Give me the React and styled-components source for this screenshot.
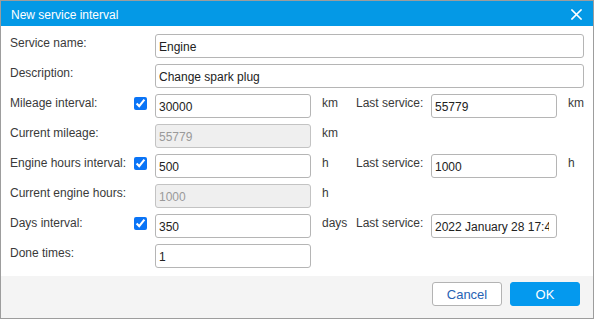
import styled, { createGlobalStyle } from 'styled-components';

const GlobalStyle = createGlobalStyle`
  html, body {
    margin: 0;
    padding: 0;
    background: #fff;
  }
  body {
    font-family: "Liberation Sans", Arial, sans-serif;
    font-size: 12px;
  }
`

const Dialog = styled.div`
  width: 594px;
  height: 319px;
  box-sizing: border-box;
  border: 1px solid #9d9d9d;
  display: flex;
  flex-direction: column;
  background: #fff;
`

const Header = styled.div`
  height: 25px;
  background: #0499e6;
  display: flex;
  align-items: center;
  justify-content: space-between;
  padding: 0 11px 0 10px;
  color: #fff;
`

const Title = styled.span`
  font-size: 12px;
  line-height: 14px;
  padding-top: 2px;
`

const CloseButton = styled.button`
  border: 0;
  background: transparent;
  padding: 0;
  width: 12px;
  height: 12px;
  display: flex;
  align-items: center;
  justify-content: center;
  cursor: pointer;
  margin-top: 2px;
`

const Form = styled.div`
  display: grid;
  grid-template-columns: 124px 21px 156px 45px 75px 126px 27px;
  grid-auto-rows: 24px;
  row-gap: 6px;
  padding: 8px 9px 8px 9px;
  flex: 1;
  align-content: start;
`

const Label = styled.label`
  grid-column: ${({ col }) => col || 1};
  color: #3a3a3a;
  line-height: 14px;
  padding-top: 2px;
  white-space: nowrap;
`

const Unit = styled.span`
  grid-column: ${({ col }) => col};
  color: #3a3a3a;
  line-height: 14px;
  padding: 2px 0 0 11px;
`

const Check = styled.input.attrs({ type: 'checkbox' })`
  grid-column: 2;
  width: 13px;
  height: 13px;
  margin: 3px 0 0 0;
  accent-color: #0a74f6;
`

const TextInput = styled.input`
  grid-column: ${({ wide, col }) => wide ? '3 / -1' : col || 3};
  box-sizing: border-box;
  height: 24px;
  width: 100%;
  border: 1px solid ${({ disabled }) => disabled ? '#c3c3c3' : '#b5b5b5'};
  border-radius: 3px;
  padding: 2px 7px 0 3px;
  font-family: "Liberation Sans", Arial, sans-serif;
  font-size: 12px;
  color: ${({ disabled }) => disabled ? '#9a9a9a' : '#222'};
  background: ${({ disabled }) => disabled ? '#efefef' : '#fff'};
  outline: none;
`

const Footer = styled.div`
  height: 42px;
  background: #f4f4f4;
  display: flex;
  justify-content: flex-end;
  align-items: flex-start;
  gap: 8px;
  padding: 6px 13px 0 0;
  box-sizing: border-box;
`

const Button = styled.button`
  width: 70px;
  height: 24px;
  box-sizing: border-box;
  border-radius: 3px;
  font-family: "Liberation Sans", Arial, sans-serif;
  font-size: 13px;
  cursor: pointer;
  border: 1px solid ${({ primary }) => primary ? '#0499ee' : '#b3b3b3'};
  background: ${({ primary }) => primary ? '#0499ee' : '#fff'};
  color: ${({ primary }) => primary ? '#fff' : '#2763b4'};
  padding: 0;
`

const App = () => {
    return (
        <>
            <GlobalStyle />
            <Dialog>
                <Header>
                    <Title>New service interval</Title>
                    <CloseButton aria-label="Close">
                        <svg width="11" height="11" viewBox="0 0 11 11">
                            <path d="M1 1 L10 10 M10 1 L1 10" stroke="#fff" strokeWidth="1.6" strokeLinecap="square" />
                        </svg>
                    </CloseButton>
                </Header>
                <Form>
                    <Label>Service name:</Label>
                    <TextInput wide defaultValue="Engine" />

                    <Label>Description:</Label>
                    <TextInput wide defaultValue="Change spark plug" />

                    <Label>Mileage interval:</Label>
                    <Check defaultChecked />
                    <TextInput defaultValue="30000" />
                    <Unit col={4}>km</Unit>
                    <Label col={5}>Last service:</Label>
                    <TextInput col={6} defaultValue="55779" />
                    <Unit col={7}>km</Unit>

                    <Label>Current mileage:</Label>
                    <TextInput disabled defaultValue="55779" />
                    <Unit col={4}>km</Unit>

                    <Label>Engine hours interval:</Label>
                    <Check defaultChecked />
                    <TextInput defaultValue="500" />
                    <Unit col={4}>h</Unit>
                    <Label col={5}>Last service:</Label>
                    <TextInput col={6} defaultValue="1000" />
                    <Unit col={7}>h</Unit>

                    <Label>Current engine hours:</Label>
                    <TextInput disabled defaultValue="1000" />
                    <Unit col={4}>h</Unit>

                    <Label>Days interval:</Label>
                    <Check defaultChecked />
                    <TextInput defaultValue="350" />
                    <Unit col={4}>days</Unit>
                    <Label col={5}>Last service:</Label>
                    <TextInput col={6} defaultValue="2022 January 28 17:45" />

                    <Label>Done times:</Label>
                    <TextInput defaultValue="1" />
                </Form>
                <Footer>
                    <Button>Cancel</Button>
                    <Button primary>OK</Button>
                </Footer>
            </Dialog>
        </>
    )
}

export default App
